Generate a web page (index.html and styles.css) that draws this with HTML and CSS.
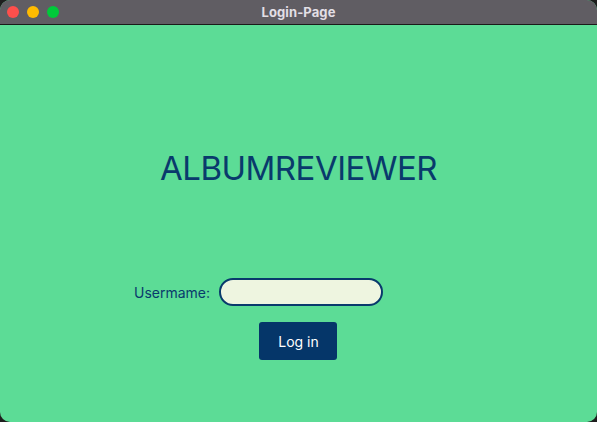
FILE: index.html
```html
<!DOCTYPE html>
<html>
<head>
<meta charset="utf-8">
<link rel="stylesheet" href="styles.css">
</head>
<body>
<div class="window">
  <div class="titlebar">
    <div class="lights">
      <span class="light red"></span>
      <span class="light yellow"></span>
      <span class="light green"></span>
    </div>
    <div class="title">Login-Page</div>
  </div>
  <div class="content">
    <h1 class="brand">ALBUMREVIEWER</h1>
    <div class="form">
      <div class="row">
        <label class="label">Usermame:</label>
        <div class="input"></div>
      </div>
      <button class="btn">Log in</button>
    </div>
  </div>
</div>
</body>
</html>
```
FILE: styles.css
```css
html, body {
  margin: 0;
  padding: 0;
  background: #1e1e1e;
  width: 597px;
  height: 422px;
  overflow: hidden;
}
.window {
  width: 597px;
  height: 422px;
  background: #5cdc96;
  border-radius: 10px;
  overflow: hidden;
  display: flex;
  flex-direction: column;
  font-family: Inter, "Noto Sans", sans-serif;
}
.titlebar {
  height: 24px;
  background: #605d63;
  border-bottom: 1px solid #1a1a1a;
  position: relative;
  display: flex;
  align-items: center;
  justify-content: center;
  flex-shrink: 0;
}
.lights {
  position: absolute;
  left: 7px;
  top: 6px;
  display: flex;
  gap: 8px;
}
.light {
  width: 12px;
  height: 12px;
  border-radius: 50%;
  display: block;
}
.red { background: #fe4f4c; }
.yellow { background: #ffbb00; }
.green { background: #00c93a; }
.title {
  color: #e2dfe5;
  font-size: 13px;
  font-weight: 700;
  letter-spacing: 0.1px;
}
.content {
  flex: 1;
  display: flex;
  flex-direction: column;
  align-items: center;
}
.brand {
  margin: 124px 0 0 0;
  font-size: 33px;
  font-weight: 400;
  color: #093a6c;
  line-height: 38px;
  letter-spacing: -0.5px;
}
.form {
  margin-top: 91px;
  display: flex;
  flex-direction: column;
  align-items: center;
}
.row {
  display: flex;
  align-items: center;
  margin-right: 80px;
}
.label {
  color: #093a6c;
  font-size: 14px;
  margin-right: 9px;
}
.input {
  width: 160px;
  height: 24px;
  border: 2px solid #093a6c;
  border-radius: 14px;
  background: #eef5e0;
}
.btn {
  margin-top: 16px;
  width: 78px;
  height: 38px;
  background: #053669;
  color: #ffffff;
  border: none;
  border-radius: 3px;
  font-family: Inter, "Noto Sans", sans-serif;
  font-size: 14px;
  padding: 0;
}
```
